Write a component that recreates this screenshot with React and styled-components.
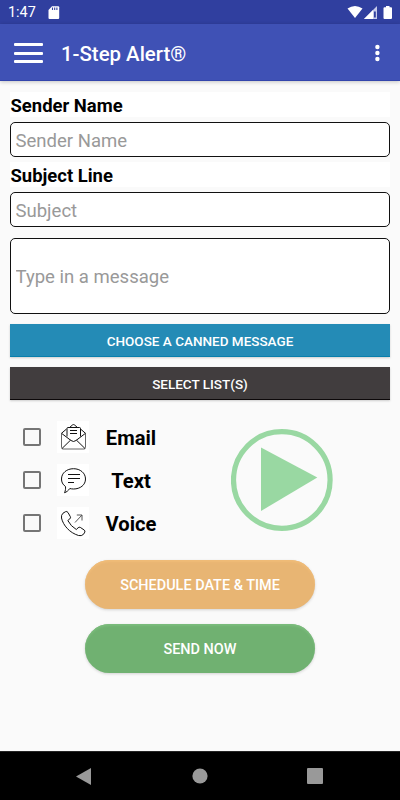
import styled, { createGlobalStyle } from 'styled-components';

const GlobalStyle = createGlobalStyle`
  * {
    box-sizing: border-box;
  }

  body {
    margin: 0;
    background: #fafafa;
    font-family: Roboto, sans-serif;
  }

  button,
  input {
    font-family: inherit;
  }
`;

const Screen = styled.div`
  width: 400px;
  height: 800px;
  display: flex;
  flex-direction: column;
  background: #fafafa;
  overflow: hidden;
`;

const StatusBar = styled.div`
  height: 24px;
  flex-shrink: 0;
  display: flex;
  align-items: center;
  padding: 1px 7px 0 8px;
  background: #303f9f;
  color: #fff;
`;

const Clock = styled.span`
  width: 40px;
  font-size: 14.4px;
  line-height: 24px;
  padding-top: 1px;
`;

const StatusIcons = styled.div`
  margin-left: auto;
  display: flex;
  height: 14px;
`;

const AppBar = styled.header`
  height: 57px;
  flex-shrink: 0;
  display: flex;
  align-items: center;
  padding: 2px 20px 0 14px;
  background: #3f51b5;
  border-bottom: 1px solid #3345ac;
  box-shadow: 0 1px 4px rgba(0, 0, 0, 0.22);
  color: #fff;
`;

const MenuButton = styled.div`
  width: 29px;
  height: 20px;
  margin-right: 18px;
  display: flex;
  flex-direction: column;
  justify-content: space-between;

  & > span {
    height: 3px;
    border-radius: 1px;
    background: #fff;
  }
`;

const Title = styled.h1`
  margin: 0;
  padding-top: 2px;
  flex: 1;
  font-size: 20.4px;
  font-weight: 500;
  line-height: 24px;
`;

const Main = styled.main`
  flex: 1;
  display: flex;
  flex-direction: column;
  padding: 11px 10px 0;
`;

const Label = styled.label`
  height: 25px;
  margin-bottom: 5px;
  padding-left: 0.5px;
  background: #fff;
  color: #000;
  font-size: 18.45px;
  font-weight: 700;
  line-height: 28px;
`;

const Field = styled.input`
  height: ${(props) => props.$height || 35}px;
  margin: 0 0 ${(props) => props.$gap}px;
  padding: 2px 4.5px 0;
  border: 1px solid #111;
  border-radius: 5px;
  background: #fff;
  font-size: 18.55px;
  outline: none;

  &::placeholder {
    color: #999;
    opacity: 1;
  }
`;

const BarButton = styled.button`
  height: 33px;
  margin: 0 0 10px;
  padding: 1px 0 0;
  border: 0;
  background: ${(props) => props.$color};
  box-shadow: 0 1px 2px rgba(0, 0, 0, 0.18), inset 0 -1px 0 ${(props) => props.$edge};
  color: #fff;
  font-size: 13.5px;
  font-weight: 500;
`;

const Channels = styled.div`
  display: flex;
  margin-top: 11px;
  padding-left: 13px;
`;

const ChannelList = styled.div`
  width: 208px;
  display: flex;
  flex-direction: column;
  gap: 11px;
`;

const Channel = styled.div`
  height: 32px;
  display: flex;
  align-items: center;
`;

const Checkbox = styled.span`
  width: 18px;
  height: 18px;
  border: 2px solid #757575;
  border-radius: 2px;
`;

const IconTile = styled.span`
  width: 32px;
  height: 32px;
  margin-left: 16px;
  display: flex;
  background: #fff;
`;

const ChannelName = styled.span`
  width: 84px;
  padding-top: 2px;
  text-align: center;
  color: #000;
  font-size: 20.2px;
  font-weight: 700;
  line-height: 24px;
`;

const PlayIcon = styled.svg`
  width: 102px;
  height: 102px;
  margin-top: 8px;
`;

const Actions = styled.div`
  display: flex;
  flex-direction: column;
  align-items: center;
  gap: 15px;
  margin-top: 21px;
`;

const PillButton = styled.button`
  width: 230px;
  height: 49px;
  padding: 1px 0 0;
  border: 0;
  border-radius: 25px;
  background: ${(props) => props.$color};
  box-shadow: 0 1px 3px rgba(0, 0, 0, 0.16), inset 0 2px 2px ${(props) => props.$edge};
  color: #fff;
  font-size: 14.45px;
  font-weight: 500;
`;

const NavBar = styled.nav`
  height: 49px;
  flex-shrink: 0;
  display: flex;
  justify-content: space-between;
  align-items: center;
  padding: 0 77px 0 76px;
  background: #000;
  border-top: 1px solid #252525;
`;

const SdCard = () => (
  <svg width="12" height="14" viewBox="0 0 12 14">
    <path d="M4 .3h6.200q1 0 1 1v10.800q0 1-1 1H1.500q-1 0-1-1V4z" fill="#fff" />
    <path d="M4.500 1.500v2.500M6.700 1.500v2.500M8.900 1.500v2.500" stroke="#303f9f" strokeWidth="1.100" />
  </svg>
);

const EmailIcon = () => (
  <svg width="32" height="32" viewBox="0 0 32 32" fill="none" stroke="#111" strokeLinejoin="round">
    <path d="M4.500 12.500v14q0 1.500 1.500 1.500h21q1.500 0 1.500-1.500v-14" stroke="#666" />
    <path d="M9.500 8l-5 4.300 9.500 7.200q2.500 2 5 0l9.500-7.200-5-4.300M12.500 6.500l3.200-2.700q.8-.5 1.600 0l3.200 2.700M5 27.500l8.500-8.300M28 27.500l-8.500-8.300" />
    <path d="M10 15.500v-8q0-1 1-1h11.500q1 0 1 1v8" />
    <path d="M13 9.500h7M13 12.500h7" />
  </svg>
);

const TextIcon = () => (
  <svg width="32" height="32" viewBox="0 0 32 32" fill="none" stroke="#111" strokeLinejoin="round">
    <path d="M8.500 22.500C5.500 20.500 4.500 17.800 4.500 15 4.500 9 9.800 4.700 16.500 4.700S28.500 9 28.500 15s-5.300 10-12 10c-1.400 0-2.500-.2-3.700-.5-1.400 2-3.200 3.600-5.300 4.200 1-2 1.200-4 1-6.200z" />
    <path d="M11 10.500h12M11 14.500h12M11 18.500h6" />
  </svg>
);

const VoiceIcon = () => (
  <svg width="32" height="32" viewBox="0 0 32 32" fill="none" stroke="#111" strokeLinejoin="round">
    <path d="M10.800 13.500l2-1.600q1.200-1 .5-2.300L11 5.500q-1-1.500-2.500-.8L6 6.200Q4 8 4.500 11c1.700 7.500 8.200 14.800 17 17.500q3 .8 5-1.200l1.300-2.200q.5-1.200-.5-2l-4-2.700q-1.200-.6-2.200.4L19.300 22.500" />
    <path d="M10.800 13.500q3 5.800 8.500 9" />
    <path d="M18 15.500L25 8M19.800 8H25v5.500" stroke="#555" />
  </svg>
);

const channels = [
  { name: 'Email', icon: <EmailIcon /> },
  { name: 'Text', icon: <TextIcon /> },
  { name: 'Voice', icon: <VoiceIcon /> },
];

export default function App() {
  return (
    <>
      <GlobalStyle />
      <Screen>
        <StatusBar>
          <Clock>1:47</Clock>
          <SdCard />
          <StatusIcons>
            <svg width="46" height="14" viewBox="0 0 46 14">
              <path d="M.5 2.500Q8-2.500 15.500 2.500L8 12z" fill="#fff" />
              <path d="M17 13L30 0v13z" fill="#c5caea" />
              <path d="M17 13l9-9v9z" fill="#fff" />
              <path d="M27 5.500h1.800v6H27z" fill="#303f9f" />
              <path d="M39 0h3.500v1.300H44q1 0 1 1V12q0 1-1 1h-6.500q-1 0-1-1V2.300q0-1 1-1H39z" fill="#fff" />
            </svg>
          </StatusIcons>
        </StatusBar>
        <AppBar>
          <MenuButton>
            <span />
            <span />
            <span />
          </MenuButton>
          <Title>1-Step Alert®</Title>
          <svg width="5" height="18" viewBox="0 0 5 18" fill="#fff">
            <circle cx="2.400" cy="3" r="2.200" />
            <circle cx="2.400" cy="9" r="2.200" />
            <circle cx="2.400" cy="15" r="2.200" />
          </svg>
        </AppBar>
        <Main>
          <Label htmlFor="sender">Sender Name</Label>
          <Field id="sender" placeholder="Sender Name" $gap={5} />
          <Label htmlFor="subject">Subject Line</Label>
          <Field id="subject" placeholder="Subject" $gap={11} />
          <Field placeholder="Type in a message" $height={76} $gap={10} />
          <BarButton $color="#248bb6" $edge="#087fac">CHOOSE A CANNED MESSAGE</BarButton>
          <BarButton $color="#413d3e" $edge="#0c0809">SELECT LIST(S)</BarButton>
          <Channels>
            <ChannelList>
              {channels.map(({ name, icon }) => (
                <Channel key={name}>
                  <Checkbox />
                  <IconTile>{icon}</IconTile>
                  <ChannelName>{name}</ChannelName>
                </Channel>
              ))}
            </ChannelList>
            <PlayIcon viewBox="0 0 102 102">
              <circle cx="50.800" cy="51" r="48.300" fill="none" stroke="#99d8a2" strokeWidth="5.200" />
              <path d="M30 18.500L86.300 48.500 30 82z" fill="#99d8a2" />
            </PlayIcon>
          </Channels>
          <Actions>
            <PillButton $color="#e8b573" $edge="#f0bc78">SCHEDULE DATE &amp; TIME</PillButton>
            <PillButton $color="#70b171" $edge="#7bbc7c">SEND NOW</PillButton>
          </Actions>
        </Main>
        <NavBar>
          <svg width="15" height="17" viewBox="0 0 15 17">
            <path d="M0 8.500L15 0v17z" fill="#999" />
          </svg>
          <svg width="17" height="16" viewBox="0 0 17 16">
            <circle cx="9" cy="8" r="7.600" fill="#999" />
          </svg>
          <svg width="16" height="16" viewBox="0 0 16 16">
            <rect width="16" height="16" rx="1" fill="#999" />
          </svg>
        </NavBar>
      </Screen>
    </>
  );
}
